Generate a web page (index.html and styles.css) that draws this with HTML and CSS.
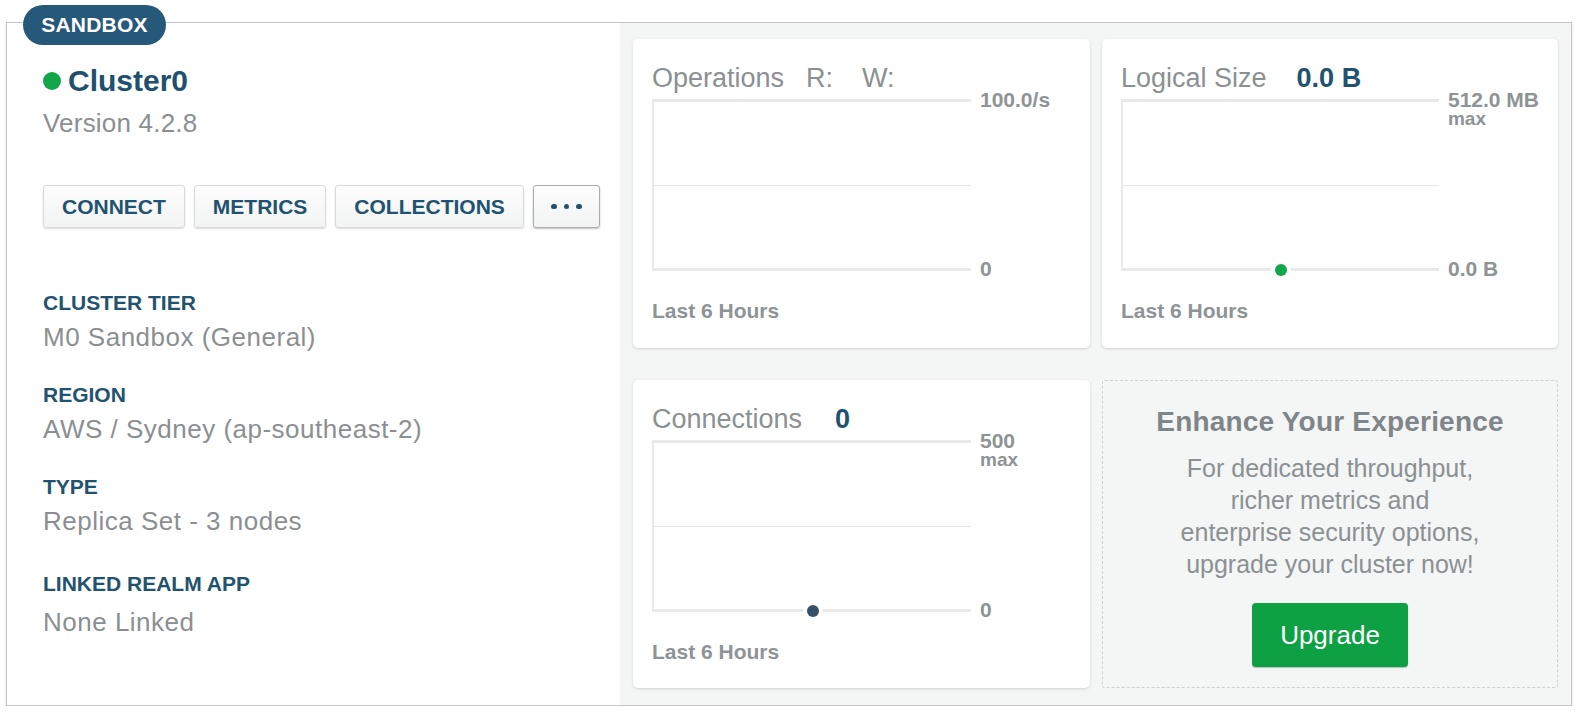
FILE: index.html
```html
<!DOCTYPE html>
<html lang="en">
<head>
<meta charset="utf-8">
<title>Cluster0</title>
<link rel="stylesheet" href="styles.css">
</head>
<body>
<div class="page">
  <div class="cluster">
    <div class="badge">SANDBOX</div>
    <section class="left">
      <div class="title"><span class="status-dot"></span><span class="name">Cluster0</span></div>
      <div class="version">Version 4.2.8</div>
      <div class="actions">
        <button class="btn">CONNECT</button>
        <button class="btn">METRICS</button>
        <button class="btn">COLLECTIONS</button>
        <button class="btn btn-more"><span class="d"></span><span class="d"></span><span class="d"></span></button>
      </div>
      <div class="details">
        <div class="group">
          <div class="label">CLUSTER TIER</div>
          <div class="value">M0 Sandbox (General)</div>
        </div>
        <div class="group">
          <div class="label">REGION</div>
          <div class="value">AWS / Sydney (ap-southeast-2)</div>
        </div>
        <div class="group">
          <div class="label">TYPE</div>
          <div class="value">Replica Set - 3 nodes</div>
        </div>
        <div class="group group-last">
          <div class="label">LINKED REALM APP</div>
          <div class="value">None Linked</div>
        </div>
      </div>
    </section>
    <section class="right">
      <div class="card">
        <div class="card-title">Operations<span class="sub sub-r">R:</span><span class="sub sub-w">W:</span></div>
        <div class="chart-row">
          <div class="chart"><div class="half"></div><div class="half"></div></div>
          <div class="axis"><div class="ax">100.0/s</div><div class="ax">0</div></div>
        </div>
        <div class="foot">Last 6 Hours</div>
      </div>
      <div class="card">
        <div class="card-title">Logical Size<span class="val">0.0 B</span></div>
        <div class="chart-row">
          <div class="chart chart-narrow"><div class="half"></div><div class="half"></div><span class="pt pt-green"></span></div>
          <div class="axis"><div class="ax"><div class="ax-main">512.0 MB</div><div class="ax-sub">max</div></div><div class="ax">0.0 B</div></div>
        </div>
        <div class="foot">Last 6 Hours</div>
      </div>
      <div class="card">
        <div class="card-title">Connections<span class="val val-c">0</span></div>
        <div class="chart-row">
          <div class="chart"><div class="half"></div><div class="half"></div><span class="pt pt-blue"></span></div>
          <div class="axis"><div class="ax"><div class="ax-main">500</div><div class="ax-sub">max</div></div><div class="ax">0</div></div>
        </div>
        <div class="foot">Last 6 Hours</div>
      </div>
      <div class="promo">
        <div class="promo-title">Enhance Your Experience</div>
        <p class="promo-text">For dedicated throughput,<br>richer metrics and<br>enterprise security options,<br>upgrade your cluster now!</p>
        <button class="upgrade">Upgrade</button>
      </div>
    </section>
  </div>
</div>
</body>
</html>
```

FILE: styles.css
```css
html, body {
  margin: 0;
  padding: 0;
  background: #ffffff;
  font-family: "Liberation Sans", Arial, Helvetica, sans-serif;
}

.page {
  padding: 22px 9px 0 6px;
}

.cluster {
  position: relative;
  width: 1566px;
  height: 684px;
  box-sizing: border-box;
  border: 1px solid #c3c5c6;
  box-shadow: 0 2px 3px rgba(0, 0, 0, 0.12);
  display: flex;
  background: #ffffff;
}

.badge {
  position: absolute;
  left: 16px;
  top: -18px;
  width: 143px;
  height: 40px;
  border-radius: 20px;
  background: #265879;
  color: #ffffff;
  font-weight: bold;
  font-size: 21px;
  line-height: 40px;
  text-align: center;
  letter-spacing: 0.2px;
}

/* left panel */
.left {
  width: 613px;
  box-sizing: border-box;
  padding: 40px 0 0 36px;
}

.title {
  display: flex;
  align-items: center;
  height: 36px;
}

.status-dot {
  width: 18px;
  height: 18px;
  border-radius: 50%;
  background: #12a64a;
  margin-right: 7px;
}

.name {
  font-size: 30px;
  line-height: 36px;
  font-weight: bold;
  color: #21506f;
}

.version {
  margin-top: 9px;
  font-size: 26px;
  line-height: 30px;
  color: #8b8f91;
  letter-spacing: 0.2px;
}

.actions {
  margin-top: 47px;
  display: flex;
  gap: 9px;
}

.btn {
  height: 43px;
  box-sizing: border-box;
  padding: 0 18px;
  border: 1px solid #d9dbdb;
  border-radius: 3px;
  background: linear-gradient(#fdfdfd, #f2f3f3);
  box-shadow: 0 1px 2px rgba(0, 0, 0, 0.14);
  font-family: "Liberation Sans", Arial, sans-serif;
  font-size: 21px;
  font-weight: bold;
  color: #21526f;
  line-height: 41px;
}

.btn-more {
  width: 67px;
  padding: 0;
  border-color: #a9adaf;
  box-shadow: 0 1px 2px rgba(0, 0, 0, 0.25);
  display: flex;
  align-items: center;
  justify-content: center;
  gap: 7px;
}

.btn-more .d {
  width: 5.5px;
  height: 5.5px;
  border-radius: 50%;
  background: #21526f;
}

.details {
  margin-top: 63px;
}

.group + .group {
  margin-top: 31px;
}

.group-last {
  margin-top: 36px !important;
}

.label {
  font-size: 21px;
  line-height: 24px;
  font-weight: bold;
  color: #21526f;
}

.value {
  margin-top: 7px;
  font-size: 26px;
  line-height: 30px;
  color: #8b8f91;
  letter-spacing: 0.5px;
}

.group-last .value {
  margin-top: 11px;
}

/* right panel */
.right {
  flex: 1;
  background: #f4f5f5;
  padding: 16px 13px;
  display: grid;
  grid-template-columns: 457px 456px;
  grid-template-rows: 309px 308px;
  column-gap: 12px;
  row-gap: 32px;
}

.card {
  background: #ffffff;
  border-radius: 5px;
  box-shadow: 0 1px 3px rgba(0, 0, 0, 0.14);
  padding: 24px 19px 0;
}

.card-title {
  font-size: 27px;
  line-height: 30px;
  color: #8b9092;
  white-space: nowrap;
}

.sub-r { margin-left: 22px; }
.sub-w { margin-left: 29px; }

.val {
  margin-left: 30px;
  font-weight: bold;
  color: #21526f;
}

.val-c { margin-left: 33px; }

.chart-row {
  margin-top: 6px;
  display: flex;
}

.chart {
  position: relative;
  width: 319px;
  height: 172px;
  box-sizing: border-box;
  border-top: 3px solid #e8e9e9;
  border-bottom: 3px solid #e8e9e9;
  border-left: 2px solid #e8e9e9;
  display: flex;
  flex-direction: column;
}

.chart-narrow { width: 318px; }

.half {
  flex: 1;
}

.half:first-child {
  border-bottom: 1px solid #e6e7e7;
}

.pt {
  position: absolute;
  left: 50%;
  bottom: -7.5px;
  width: 12px;
  height: 12px;
  margin-left: -6px;
  border-radius: 50%;
  box-shadow: 0 0 0 4px #ffffff;
}

.pt-green { background: #12a64a; }
.pt-blue { background: #34536a; }

.axis {
  margin: -8px 0 -7px 9px;
  display: flex;
  flex-direction: column;
  justify-content: space-between;
}

.ax {
  font-size: 21px;
  line-height: 18px;
  font-weight: bold;
  color: #8e9395;
  white-space: nowrap;
}

.ax-sub {
  font-size: 19px;
  line-height: 18px;
  margin-top: 1px;
}

.foot {
  margin-top: 28px;
  font-size: 21px;
  line-height: 24px;
  font-weight: bold;
  color: #8e9395;
}

/* promo */
.promo {
  border: 1.5px dashed #cfd1d1;
  border-radius: 3px;
  text-align: center;
  padding-top: 25px;
  box-sizing: border-box;
}

.promo-title {
  font-size: 28px;
  line-height: 32px;
  font-weight: bold;
  color: #7f8689;
  letter-spacing: 0.2px;
}

.promo-text {
  margin: 14px 0 0;
  font-size: 25px;
  line-height: 32px;
  color: #8b9193;
}

.upgrade {
  margin-top: 23px;
  width: 156px;
  height: 64px;
  border: none;
  border-radius: 4px;
  background: #0da144;
  box-shadow: 0 1px 1px rgba(0, 0, 0, 0.25);
  color: #ffffff;
  font-family: "Liberation Sans", Arial, sans-serif;
  font-size: 26px;
  line-height: 64px;
  padding: 0;
}
```
